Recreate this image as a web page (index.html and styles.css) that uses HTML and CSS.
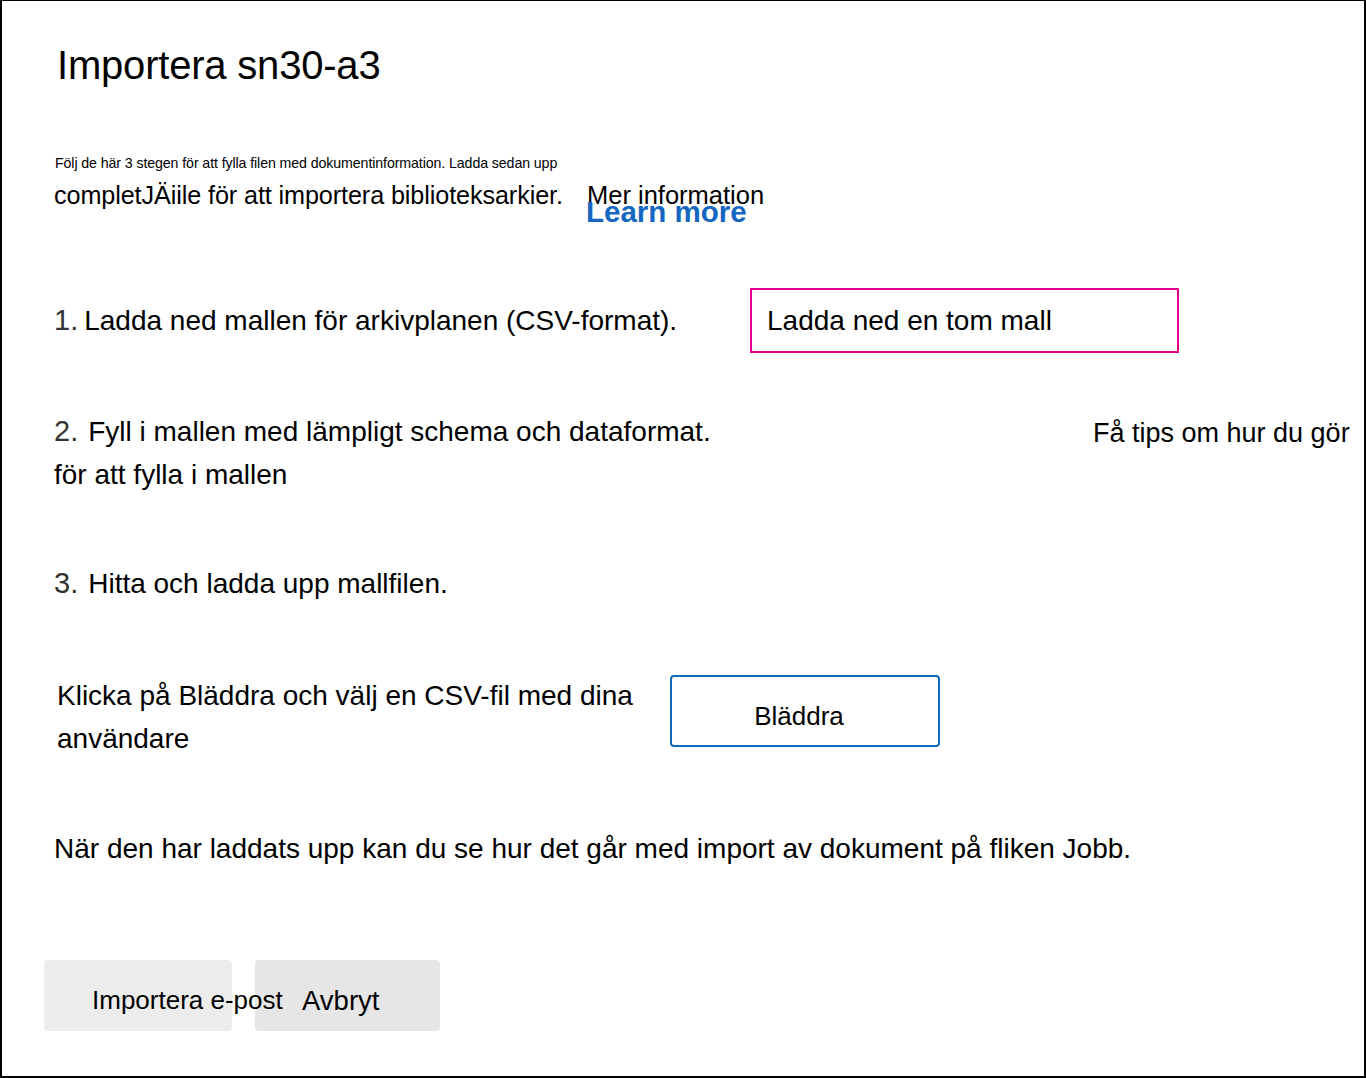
FILE: index.html
```html
<!DOCTYPE html>
<html lang="sv">
<head>
<meta charset="utf-8">
<title>Importera sn30-a3</title>
<link rel="stylesheet" href="styles.css">
</head>
<body>
<div class="frame">
  <h1 class="title">Importera sn30-a3</h1>

  <p class="intro-small">Följ de här 3 stegen för att fylla filen med dokumentinformation. Ladda sedan upp</p>
  <div class="intro-row">
    <span class="intro-big">completJÄiile för att importera biblioteksarkier.</span>
    <span class="more">Mer information<a class="learn" href="#">Learn more</a></span>
  </div>

  <div class="step step-one">
    <div class="step-label"><span class="num">1.</span>Ladda ned mallen för arkivplanen (CSV-format).</div>
    <button class="btn-template" type="button">Ladda ned en tom mall</button>
  </div>

  <div class="step-two">
    <div class="step-label"><span class="num">2.</span>Fyll i mallen med lämpligt schema och dataformat.</div>
    <div class="tips">Få tips om hur du gör</div>
    <div class="step-cont">för att fylla i mallen</div>
  </div>

  <div class="step-three"><span class="num">3.</span>Hitta och ladda upp mallfilen.</div>

  <div class="browse-row">
    <p class="browse-text">Klicka på Bläddra och välj en CSV-fil med dina användare</p>
    <button class="btn-browse" type="button">Bläddra</button>
  </div>

  <p class="after">När den har laddats upp kan du se hur det går med import av dokument på fliken Jobb.</p>

  <div class="actions">
    <button class="btn-act btn-import" type="button">Importera e-post</button>
    <button class="btn-act btn-cancel" type="button">Avbryt</button>
  </div>
</div>
</body>
</html>
```

FILE: styles.css
```css
html, body {
  margin: 0;
  padding: 0;
  background: #fff;
}

body {
  font-family: "Liberation Sans", Arial, sans-serif;
  color: #000;
}

.frame {
  width: 1366px;
  height: 1078px;
  box-sizing: border-box;
  border-style: solid;
  border-color: #000;
  border-width: 1px 2px 2px 2px;
  padding: 40px 0 0 52px;
  position: relative;
}

.title {
  margin: 0 0 0 3px;
  font-size: 40px;
  font-weight: 400;
  line-height: 48px;
  letter-spacing: -0.2px;
}

.intro-small {
  margin: 65px 0 0 1px;
  font-size: 14.2px;
  line-height: 18px;
  letter-spacing: -0.1px;
}

.intro-row {
  display: flex;
  align-items: center;
  margin-top: 8px;
  height: 30px;
}

.intro-big {
  font-size: 25.2px;
  line-height: 30px;
  letter-spacing: -0.1px;
  width: 533px;
  white-space: nowrap;
}

.more {
  position: relative;
  font-size: 25.5px;
  line-height: 30px;
}

.learn {
  position: absolute;
  left: -1px;
  top: 17px;
  color: #1467c0;
  text-decoration: none;
  font-size: 29.5px;
  font-weight: 700;
  line-height: 30px;
  white-space: nowrap;
}

.step {
  display: flex;
  align-items: center;
}

.step-one {
  margin-top: 78px;
  height: 65px;
}

.step-label {
  font-size: 28px;
  line-height: 42px;
  white-space: nowrap;
}

.step-one .step-label {
  width: 696px;
}

.num {
  display: inline-block;
  color: #333;
  font-size: 29px;
  margin-right: 10px;
}

.step-one .num {
  margin-right: 6px;
}

.btn-template {
  width: 429px;
  height: 65px;
  box-sizing: border-box;
  border: 2px solid #e3008c;
  background: #fff;
  padding: 0 0 0 15px;
  text-align: left;
  font-family: "Liberation Sans", Arial, sans-serif;
  font-size: 28px;
  color: #000;
}

.step-two {
  margin-top: 57px;
  display: grid;
  grid-template-columns: 1039px auto;
  font-size: 28px;
  line-height: 42px;
}

.tips {
  white-space: nowrap;
  padding-top: 2px;
  font-size: 27px;
}

.step-cont {
  grid-column: 1 / span 2;
}

.step-three {
  margin-top: 66px;
  font-size: 28px;
  line-height: 42px;
}

.browse-row {
  display: flex;
  align-items: flex-start;
  margin-top: 69px;
}

.browse-text {
  margin: 0 0 0 3px;
  width: 613px;
  font-size: 28px;
  line-height: 43px;
}

.btn-browse {
  margin-top: 1px;
  width: 270px;
  height: 72px;
  box-sizing: border-box;
  border: 2px solid #0f6cbd;
  border-radius: 4px;
  background: #fff;
  font-family: "Liberation Sans", Arial, sans-serif;
  font-size: 26px;
  color: #000;
  padding: 10px 12px 0 0;
}

.after {
  margin: 68px 0 0 0;
  font-size: 28px;
  line-height: 42px;
}

.actions {
  display: flex;
  gap: 23px;
  margin: 90px 0 0 -10px;
}

.btn-act {
  height: 71px;
  border: none;
  border-radius: 4px;
  font-family: "Liberation Sans", Arial, sans-serif;
  font-size: 26px;
  color: #000;
  text-align: left;
  white-space: nowrap;
  overflow: visible;
  padding: 10px 0 0 0;
}

.btn-import {
  width: 188px;
  background: #ececec;
  padding-left: 48px;
  position: relative;
  z-index: 1;
}

.btn-cancel {
  width: 185px;
  background: #e6e6e6;
  padding-left: 47px;
  font-size: 27.5px;
}
```
